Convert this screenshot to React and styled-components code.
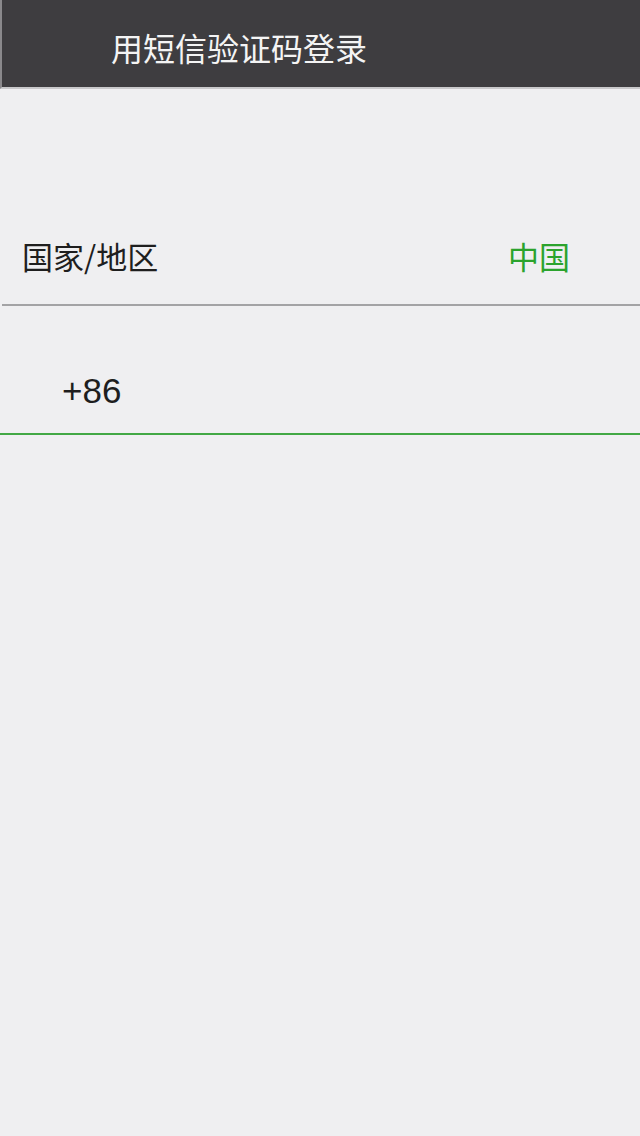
import React from 'react'
import styled, { createGlobalStyle } from 'styled-components'

const Global = createGlobalStyle`
  html, body {
    margin: 0;
    padding: 0;
    background: #efeff1;
  }
  body {
    font-family: "Noto Sans CJK SC", "Noto Sans", sans-serif;
  }
`

const Page = styled.div`
  width: 640px;
  min-height: 1136px;
  background: #efeff1;
  display: flex;
  flex-direction: column;
`

const Header = styled.header`
  height: 89px;
  background: #3e3d40;
  border-left: 2px solid #8a898c;
  border-bottom: 2px solid #c9c9cb;
  display: flex;
  align-items: center;
  padding: 6px 0 0 109px;
  box-sizing: border-box;
`

const Title = styled.h1`
  margin: 0;
  color: #f4f4f4;
  font-size: 32px;
  line-height: 40px;
  font-weight: 400;
`

const Row = styled.div`
  height: ${p => p.h}px;
  display: flex;
  align-items: flex-end;
  justify-content: space-between;
  padding: 0 70px ${p => p.bottom}px ${p => p.indent}px;
  margin-left: ${p => p.inset || 0}px;
  border-bottom: 2px solid ${p => p.line};
  box-sizing: border-box;
  font-size: 31px;
  line-height: 40px;
`

const Label = styled.span`
  color: #1e1e1e;
`

const Code = styled.span`
  color: #1e1e1e;
  font-family: "Liberation Sans", sans-serif;
  font-size: 35px;
`

const Value = styled.span`
  color: #2ba32d;
`

export default function App() {
  return (
    <Page>
      <Global />
      <Header>
        <Title>用短信验证码登录</Title>
      </Header>
      <Row h={217} bottom={28} indent={20} inset={2} line="#a3a3a5">
        <Label>国家/地区</Label>
        <Value>中国</Value>
      </Row>
      <Row h={129} bottom={22} indent={62} line="#42a845">
        <Code>+86</Code>
      </Row>
    </Page>
  )
}
